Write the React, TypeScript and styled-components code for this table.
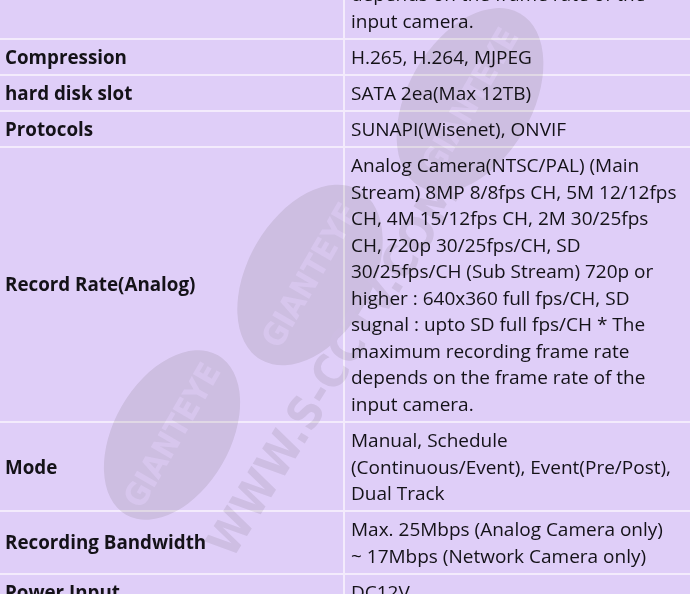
import React from "react";
import styled, { createGlobalStyle } from "styled-components";

const Global = createGlobalStyle`
  html, body { margin: 0; padding: 0; background: #dfcef8; }
  body { font-family: "Open Sans", "Noto Sans", sans-serif; }
`;

const Page = styled.div`
  position: relative;
  width: 690px;
  height: 594px;
  overflow: hidden;
  background: #dfcef8;
`;

const Table = styled.table`
  width: 690px;
  margin-top: -22.5px;
  border-collapse: collapse;
  table-layout: fixed;
  font-size: 19px;
  line-height: 26.55px;
  color: #141218;
`;

const Row = styled.tr`
  border-bottom: 2px solid #f3ebfc;
`;

const Label = styled.th`
  width: 332px;
  padding: 3.75px 6px 3.75px 5px;
  text-align: left;
  vertical-align: middle;
  font-size: 18.8px;
  font-weight: 700;
  border-right: 2px solid #f3ebfc;
  white-space: nowrap;
`;

const Value = styled.td`
  padding: 3.75px 0 3.75px 6px;
  text-align: left;
  vertical-align: middle;
  font-weight: 400;
`;

const Line = styled.span`
  display: block;
  white-space: nowrap;
`;

const Watermark = styled.svg`
  position: absolute;
  left: 0;
  top: 0;
  pointer-events: none;
  mix-blend-mode: multiply;
`;

const rows: { label: string; lines: string[] }[] = [
  { label: "", lines: ["depends on the frame rate of the", "input camera."] },
  { label: "Compression", lines: ["H.265, H.264, MJPEG"] },
  { label: "hard disk slot", lines: ["SATA 2ea(Max 12TB)"] },
  { label: "Protocols", lines: ["SUNAPI(Wisenet), ONVIF"] },
  {
    label: "Record Rate(Analog)",
    lines: [
      "Analog Camera(NTSC/PAL) (Main",
      "Stream) 8MP 8/8fps CH, 5M 12/12fps",
      "CH, 4M 15/12fps CH, 2M 30/25fps",
      "CH, 720p 30/25fps/CH, SD",
      "30/25fps/CH (Sub Stream) 720p or",
      "higher : 640x360 full fps/CH, SD",
      "sugnal : upto SD full fps/CH * The",
      "maximum recording frame rate",
      "depends on the frame rate of the",
      "input camera.",
    ],
  },
  { label: "Mode", lines: ["Manual, Schedule", "(Continuous/Event), Event(Pre/Post),", "Dual Track"] },
  {
    label: "Recording Bandwidth",
    lines: ["Max. 25Mbps (Analog Camera only)", "~ 17Mbps (Network Camera only)"],
  },
  { label: "Power Input", lines: ["DC12V"] },
];

const Seal = ({ cx, cy, rx, ry }: { cx: number; cy: number; rx: number; ry: number }) => (
  <g transform={`rotate(-60 ${cx} ${cy})`}>
    <ellipse cx={cx} cy={cy} rx={rx} ry={ry} fill="#ebebe8" />
    <text
      x={cx}
      y={cy + 11}
      textAnchor="middle"
      fontFamily="'DejaVu Sans Condensed', 'Liberation Sans Narrow', sans-serif"
      fontWeight="700"
      fontSize="32"
      fill="#f6f6f4"
    >
      GIANTEYE
    </text>
  </g>
);

export default function App() {
  return (
    <>
      <Global />
      <Page>
        <Table>
          <tbody>
            {rows.map((r, i) => (
              <Row key={i}>
                <Label>{r.label}</Label>
                <Value>
                  {r.lines.map((l, j) => (
                    <Line key={j}>{l}</Line>
                  ))}
                </Value>
              </Row>
            ))}
          </tbody>
        </Table>
        <Watermark width={690} height={594} viewBox="0 0 690 594">
          <Seal cx={470} cy={100} rx={100} ry={62} />
          <Seal cx={310} cy={275} rx={98} ry={62} />
          <Seal cx={172} cy={435} rx={92} ry={58} />
          <text
            x={0}
            y={0}
            transform="translate(232 560) rotate(-58)"
            fontFamily="'DejaVu Sans Condensed', sans-serif"
            fontWeight="700"
            fontSize="46"
            fill="#ececea"
          >
            WWW.S-CCTV.COM
          </text>
        </Watermark>
      </Page>
    </>
  );
}
